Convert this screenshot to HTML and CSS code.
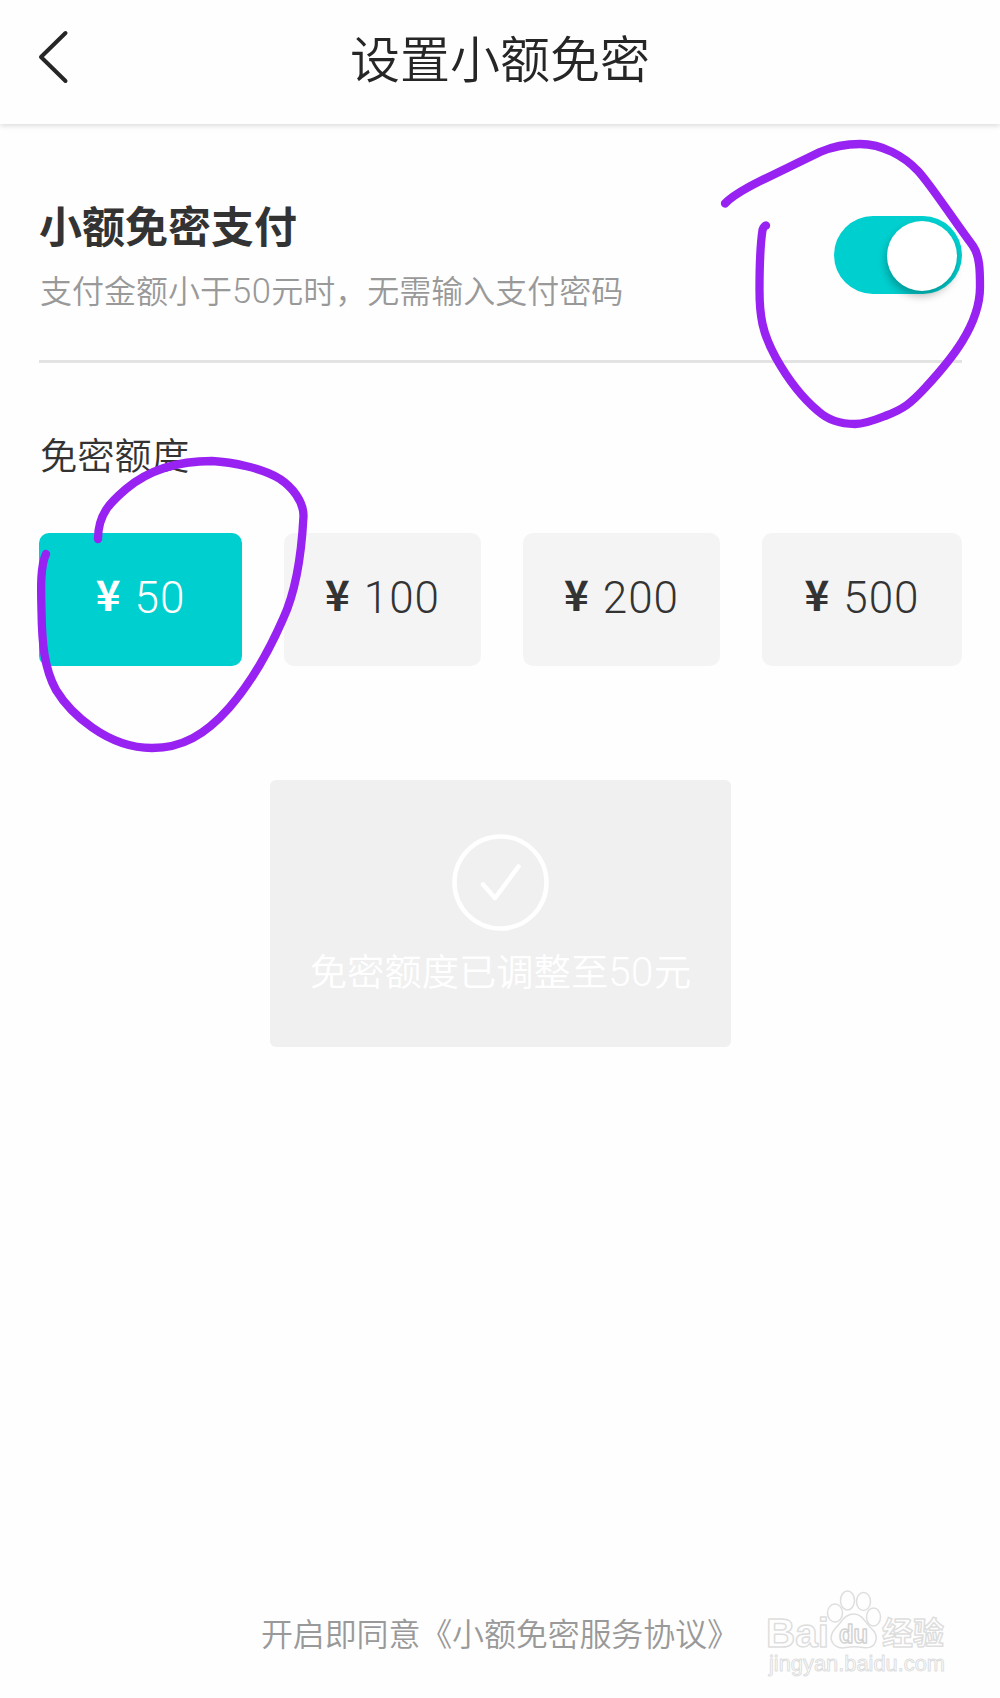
FILE: index.html
```html
<!DOCTYPE html>
<html lang="zh-CN">
  <head>
    <meta charset="utf-8">
    <title>设置小额免密</title>
    <link rel="stylesheet" href="styles.css">
  </head>
  <body>
    <header class="header">
      <svg class="back" width="34" height="56" viewBox="0 0 34 56">
        <path d="M30.500 4 L6 28 L30.500 52"/>
      </svg>
      <h1>设置小额免密</h1>
    </header>

    <main class="content">
      <div class="row">
        <div>
          <h2>小额免密支付</h2>
          <p class="desc">支付金额小于<span class="num">50</span>元时，无需输入支付密码</p>
        </div>
        <div class="switch"><div class="knob"></div></div>
      </div>

      <h3>免密额度</h3>
      <div class="amounts">
        <div class="amount active"><b>¥</b><span>50</span></div>
        <div class="amount"><b>¥</b><span>100</span></div>
        <div class="amount"><b>¥</b><span>200</span></div>
        <div class="amount"><b>¥</b><span>500</span></div>
      </div>

      <div class="toast">
        <svg width="98" height="98" viewBox="0 0 98 98">
          <circle cx="48.500" cy="49.500" r="46"/>
          <path d="M31 51.500 L43 65 L66.500 33.500"/>
        </svg>
        <p>免密额度已调整至<span class="num">50</span>元</p>
      </div>
    </main>

    <footer class="footer">开启即同意《小额免密服务协议》</footer>

    <svg class="watermark" width="200" height="100" viewBox="760 1585 200 100">
      <ellipse cx="835" cy="1613" rx="7.500" ry="9"/>
      <ellipse cx="847.500" cy="1600.500" rx="7" ry="9.500"/>
      <ellipse cx="863.500" cy="1601.500" rx="7" ry="9"/>
      <ellipse cx="873.500" cy="1617" rx="7" ry="9"/>
      <path d="M854 1614 C862 1614 865 1622 870 1627 C876 1632 878 1637 875 1643 C872 1649 865 1648 859 1647 C855 1646.500 851 1646.500 846 1647.500 C839 1649 832 1646 831 1638 C831 1631 836 1628 840 1623 C844 1617 848 1614 854 1614 Z"/>
      <text class="latin" x="766" y="1647" font-size="40" textLength="63" lengthAdjust="spacingAndGlyphs">Bai</text>
      <text class="latin du" x="839" y="1643" font-size="25" textLength="29" lengthAdjust="spacingAndGlyphs">du</text>
      <text class="cjk" x="882" y="1644" font-size="31">经验</text>
      <text class="latin url" x="769" y="1671" font-size="22" textLength="176" lengthAdjust="spacingAndGlyphs">jingyan.baidu.com</text>
    </svg>

    <!-- hand drawn marks -->
    <svg class="marks" width="1000" height="800" viewBox="0 0 1000 800">
      <path d="M725 203.500 C738 190 765 179 820 152 C834 146 848 144 860 144 C882 144 904 156 918 171 C931 185 952 218 973 246 C980 256 980 272 980 287 C980 325 951 360 925 388 C911 403 904 409 885 416 C875 420 865 424 855 424 C842 424 829 421 818 411 C800 396 785 374 776 358 C762 333 759.500 315 759.500 290 C759.500 262 761 240 762.500 230 Q764 226 766 225.500"/>
      <path d="M98 539 C98 513 112 501 126 489 C152 467 182 461 212 461 C232 462 262 468 280 479 C292 487 303.500 501 303.500 516 C302 545 298 587 283 619 C269 651 250 684 229 708 C205 735 182 748 152 748 C107 748 70 713 56 690 C44 668 42 643 41.500 611 C41 590 40 567 46 554"/>
    </svg>
  </body>
</html>
```

FILE: styles.css
```css
* {
  box-sizing: border-box;
}
body {
  margin: 0;
  height: 1698px;
  position: relative;
  display: flex;
  flex-direction: column;
  background: #fefefe;
  color: #333;
  font-family: "Noto Sans CJK SC", sans-serif;
  font-weight: 350;
  overflow: hidden;
}
h1, h2, h3, p {
  margin: 0;
}
svg {
  fill: none;
  stroke-linecap: round;
  stroke-linejoin: round;
}
.num {
  font-family: Roboto, sans-serif;
  font-weight: 300;
  font-size: 1.08em;
  letter-spacing: 0.5px;
}
.header {
  height: 124px;
  flex: none;
  display: grid;
  grid-template-columns: 100px 1fr 100px;
  align-items: center;
  padding-bottom: 10px;
  background: #fefefe;
  box-shadow: 0 2px 5px rgba(0, 0, 0, 0.13);
}
.back {
  margin-left: 35px;
  stroke: #262626;
  stroke-width: 4;
}
h1 {
  margin-top: -2px;
  font-size: 50px;
  line-height: 70px;
  font-weight: 350;
  text-align: center;
  color: #262626;
}
.content {
  flex: 1;
  padding: 0 38px 0 39px;
}
.row {
  display: flex;
  justify-content: space-between;
  align-items: flex-start;
  height: 239px;
  padding-top: 71px;
  border-bottom: 3px solid #e3e3e3;
}
h2 {
  font-size: 43px;
  line-height: 58px;
  font-weight: 700;
}
.desc {
  margin-top: 12px;
  padding-left: 1px;
  font-size: 32px;
  line-height: 48px;
  color: #999;
}
.switch {
  width: 128px;
  height: 78px;
  margin-top: 21px;
  padding: 5px;
  display: flex;
  justify-content: flex-end;
  border-radius: 39px;
  background: #00cfcf;
}
.knob {
  width: 70px;
  height: 70px;
  border-radius: 50%;
  background: #fff;
  box-shadow: -1px 5px 9px rgba(0, 0, 0, 0.28);
}
h3 {
  margin-top: 65px;
  padding-left: 1px;
  font-size: 37.3px;
  line-height: 52px;
  font-weight: 350;
}
.amounts {
  display: grid;
  grid-template-columns: 203px 197px 197px 200px;
  justify-content: space-between;
  margin-top: 53px;
}
.amount {
  display: flex;
  justify-content: center;
  align-items: center;
  gap: 14px;
  height: 133px;
  padding-bottom: 3px;
  border-radius: 10px;
  background: #f4f4f4;
  font-family: Roboto, sans-serif;
  font-weight: 300;
  font-size: 44px;
  letter-spacing: 1px;
}
.amount b {
  margin-bottom: 10px;
  font-size: 42px;
  font-family: "Noto Sans CJK SC", sans-serif;
  line-height: 50px;
  font-weight: 700;
  letter-spacing: 0;
}
.active {
  background: #00cfcf;
  color: #fff;
}
.toast {
  width: 461px;
  height: 267px;
  margin: 114px auto 0 231px;
  padding-top: 53px;
  display: flex;
  flex-direction: column;
  align-items: center;
  border-radius: 6px;
  background: #f0f0f0;
  color: #fff;
  font-size: 37.3px;
  line-height: 54px;
}
.toast svg {
  stroke: #fff;
  stroke-width: 4.5;
}
.toast p {
  margin-top: 12px;
}
.footer {
  height: 90px;
  line-height: 48px;
  padding-left: 261px;
  font-size: 32px;
  letter-spacing: -0.15px;
  color: #999;
}
.watermark {
  position: absolute;
  left: 760px;
  top: 1585px;
  stroke: #dedede;
  stroke-width: 1.5;
}
.watermark text {
  font-weight: 700;
}
.latin {
  font-family: "Liberation Sans", sans-serif;
}
.watermark .du {
  stroke: #d2d2d2;
}
.watermark .url {
  font-weight: 400;
  stroke-width: 1;
}
.marks {
  position: absolute;
  left: 0;
  top: 0;
  stroke: #9722f2;
  stroke-width: 8.3;
}
```
